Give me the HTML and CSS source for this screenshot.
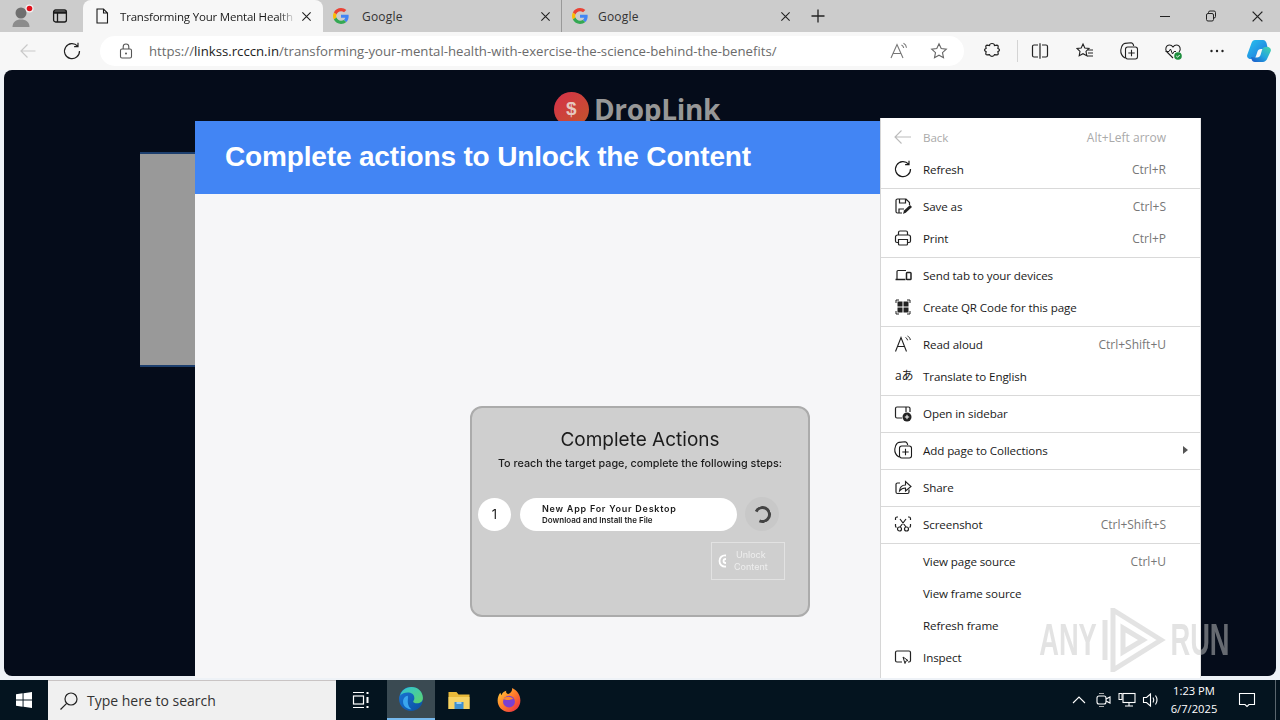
FILE: index.html
```html
<!DOCTYPE html>
<html lang="en">
<head>
    <meta charset="UTF-8">
    <title>Transforming Your Mental Health</title>
    <link rel="stylesheet" href="styles.css">
</head>
<body>
    <svg class="defs" width="0" height="0">
        <symbol id="g-logo" viewBox="0 0 48 48">
            <path fill="#EA4335" d="M24 9.5c3.54 0 6.71 1.22 9.21 3.6l6.85-6.85C35.9 2.38 30.47 0 24 0 14.62 0 6.51 5.38 2.56 13.22l7.98 6.19C12.43 13.72 17.74 9.5 24 9.5z"/>
            <path fill="#4285F4" d="M46.98 24.55c0-1.57-.15-3.09-.38-4.55H24v9.02h12.94c-.58 2.96-2.26 5.48-4.78 7.18l7.73 6c4.51-4.18 7.09-10.36 7.09-17.65z"/>
            <path fill="#FBBC05" d="M10.53 28.59c-.48-1.45-.76-2.99-.76-4.59s.27-3.14.76-4.59l-7.98-6.19C.92 16.46 0 20.12 0 24c0 3.88.92 7.54 2.56 10.78l7.97-6.19z"/>
            <path fill="#34A853" d="M24 48c6.48 0 11.93-2.13 15.89-5.81l-7.73-6c-2.15 1.45-4.92 2.3-8.16 2.3-6.26 0-11.57-4.22-13.47-9.91l-7.98 6.19C6.51 42.62 14.62 48 24 48z"/>
        </symbol>
        <symbol id="i-refresh" viewBox="0 0 20 20">
            <path d="M15.6 5.2A7.5 7.5 0 1 0 17.5 10M16 1.8v3.9h-3.9" fill="none" stroke="currentColor" stroke-width="1.2"/>
        </symbol>
        <symbol id="i-close" viewBox="0 0 12 12">
            <path d="M1.5 1.5l9 9M10.5 1.5l-9 9" fill="none" stroke="currentColor" stroke-width="1.2"/>
        </symbol>
        <symbol id="i-collections" viewBox="0 0 20 20">
            <path d="M6 17C3.500 15.500 1.500 12.500 1.800 9 2 6.500 3 4.500 4 3.500c.5-.6 1.200-1 2-1.100l6-.6c1.300 0 2.300 1 2.700 3.200" fill="none" stroke="currentColor" stroke-width="1.1"/>
            <rect x="6.500" y="6" width="12" height="12" rx="2.200" fill="none" stroke="currentColor" stroke-width="1.1"/>
            <path d="M12.500 8.800v6.400M9.300 12h6.400" fill="none" stroke="currentColor" stroke-width="1.1"/>
        </symbol>
    </svg>

    <!-- Flikar -->
    <div class="tabstrip">
        <div class="profile">
            <svg width="24" height="24" viewBox="0 0 24 24">
                <circle cx="10" cy="9" r="5.500" fill="#6f6f6f"/>
                <path d="M1.500 23c0-5 3.500-7.500 8.500-7.500s8.500 2.500 8.500 7.500z" fill="#8c8c8c"/>
                <circle cx="18.500" cy="4.500" r="4" fill="#f3f3f3"/>
                <circle cx="18.500" cy="4.500" r="2.800" fill="#e0101c"/>
            </svg>
        </div>
        <div class="tabs-button">
            <svg width="16" height="16" viewBox="0 0 16 16">
                <rect x="1.600" y="2" width="12.800" height="12" rx="2" fill="none" stroke="#1a1a1a" stroke-width="1.300"/>
                <path d="M1.600 3.800h12.800M1.600 5h12.800M5.500 5v9" fill="none" stroke="#1a1a1a" stroke-width="1.300"/>
            </svg>
        </div>
        <div class="tab active">
            <svg width="14" height="16" viewBox="0 0 14 16">
                <path d="M2 1h6.500L12.500 5v10H2z M8.500 1v4h4" fill="none" stroke="#1a1a1a" stroke-width="1.100"/>
            </svg>
            <span class="tab-title fade">Transforming Your Mental Health</span>
            <svg class="tab-close" width="11" height="11"><use href="#i-close"/></svg>
        </div>
        <div class="tab">
            <svg width="16" height="16"><use href="#g-logo"/></svg>
            <span class="tab-title">Google</span>
            <svg class="tab-close" width="11" height="11"><use href="#i-close"/></svg>
        </div>
        <div class="tab third">
            <svg width="16" height="16"><use href="#g-logo"/></svg>
            <span class="tab-title">Google</span>
            <svg class="tab-close" width="11" height="11"><use href="#i-close"/></svg>
        </div>
        <div class="new-tab">
            <svg width="16" height="16" viewBox="0 0 16 16"><path d="M8 1.500v13M1.500 8h13" fill="none" stroke="#222" stroke-width="1.300"/></svg>
        </div>
        <div class="window-buttons">
            <div class="win-btn"><svg width="12" height="12" viewBox="0 0 12 12"><path d="M1 6.500h10" stroke="#222" stroke-width="1"/></svg></div>
            <div class="win-btn"><svg width="12" height="12" viewBox="0 0 12 12"><path d="M3.500 3.500V2.500a1.500 1.500 0 0 1 1.500-1.500h4a1.500 1.500 0 0 1 1.500 1.500v4A1.500 1.500 0 0 1 9 8M1.500 5a1.500 1.500 0 0 1 1.500-1.500h4A1.500 1.500 0 0 1 8.500 5v4.500A1.500 1.500 0 0 1 7 11H3a1.500 1.500 0 0 1-1.500-1.500z" fill="none" stroke="#222"/></svg></div>
            <div class="win-btn"><svg width="13" height="13"><use href="#i-close"/></svg></div>
        </div>
    </div>

    <!-- Adressfält och verktyg -->
    <div class="toolbar">
        <div class="tool back">
            <svg width="18" height="18" viewBox="0 0 18 18"><path d="M16.500 9H2M8.500 2.500L2 9l6.500 6.500" fill="none" stroke="#c9c9c9" stroke-width="1.200"/></svg>
        </div>
        <div class="tool refresh"><svg width="20" height="20"><use href="#i-refresh"/></svg></div>
        <div class="address">
            <svg width="14" height="16" viewBox="0 0 14 16">
                <rect x="1.500" y="6" width="11" height="9" rx="1.500" fill="none" stroke="#555" stroke-width="1.100"/>
                <path d="M4.200 6V3.800a2.800 2.800 0 0 1 5.600 0V6" fill="none" stroke="#555" stroke-width="1.100"/>
                <circle cx="7" cy="10.500" r="1" fill="#555"/>
            </svg>
            <span class="url"><span class="url-dim">https://</span>linkss.rcccn.in<span class="url-dim">/transforming-your-mental-health-with-exercise-the-science-behind-the-benefits/</span></span>
            <svg class="addr-read" width="20" height="20" viewBox="0 0 20 20">
                <path d="M2 17L8 3.500 14 17M4 12.500h8" fill="none" stroke="#777" stroke-width="1.100"/>
                <path d="M12.500 4c1.200.6 2 1.600 2.200 3M14.500 2.200c1.800.9 2.800 2.500 3 4.500" fill="none" stroke="#777" stroke-width="1.100"/>
            </svg>
            <svg class="addr-star" width="18" height="18" viewBox="0 0 18 18"><path d="M9 1.800l2.200 4.700 5.100.6-3.800 3.500 1 5.100L9 13.200l-4.500 2.500 1-5.100L1.700 7.100l5.100-.6z" fill="none" stroke="#666" stroke-width="1.100"/></svg>
        </div>
        <div class="tool extensions">
            <svg width="18" height="18" viewBox="0 0 18 18"><path d="M9 1.500c1.500 0 2.500 1 2.500 2l2.500-.3c.8 0 1.200.5 1.200 1.200l-.3 2.100c1.100.3 1.600 1 1.600 1.500s-.5 1.300-1.600 1.600l.3 2.100c0 .8-.5 1.300-1.200 1.200l-2.500-.3c-.3 1-1.200 1.700-2.500 1.700s-2.200-.7-2.500-1.700l-2.500.3c-.7 0-1.200-.4-1.200-1.200l.3-2.100c-1.100-.3-1.600-1-1.600-1.600s.5-1.200 1.600-1.500l-.3-2.100c0-.7.4-1.200 1.200-1.200l2.500.3c0-1 1-2 2.500-2z" fill="none" stroke="#222" stroke-width="1.200"/></svg>
        </div>
        <div class="divider"></div>
        <div class="tool split">
            <svg width="18" height="18" viewBox="0 0 18 18"><path d="M7 3H3a1.500 1.500 0 0 0-1.500 1.500v9A1.500 1.500 0 0 0 3 15h4M11 3h4a1.500 1.500 0 0 1 1.500 1.500v9A1.500 1.500 0 0 1 15 15h-4M9 1.200v15.600" fill="none" stroke="#222" stroke-width="1.200"/></svg>
        </div>
        <div class="tool">
            <svg width="18" height="18" viewBox="0 0 18 18"><path d="M7 2l1.800 4 4.200.5-3 2.900.8 4.300L7 11.700l-3.800 2 .8-4.300L1 6.500 5.200 6z" fill="none" stroke="#222" stroke-width="1.100"/><path d="M12 8h5M12 11h5M11 14h6" stroke="#222"/></svg>
        </div>
        <div class="tool"><svg width="20" height="20"><use href="#i-collections"/></svg></div>
        <div class="tool">
            <svg width="19" height="19" viewBox="0 0 19 19">
                <path d="M9 16L3 10C.5 7.500 2 3 5.500 3c1.500 0 2.700.8 3.500 2 .8-1.200 2-2 3.500-2 3.500 0 5 4.500 2.500 7" fill="none" stroke="#222" stroke-width="1.100"/>
                <path d="M1.500 9.500h3.500l1.500-2.500 2 5 1.500-2.500h2" fill="none" stroke="#222"/>
                <circle cx="14" cy="14" r="3.800" fill="#1e8e3e"/>
                <path d="M12.300 14l1.200 1.200 2.200-2.200" fill="none" stroke="#fff"/>
            </svg>
        </div>
        <div class="tool">
            <svg width="16" height="16" viewBox="0 0 16 16"><circle cx="2.500" cy="8" r="1.200" fill="#222"/><circle cx="8" cy="8" r="1.200" fill="#222"/><circle cx="13.500" cy="8" r="1.200" fill="#222"/></svg>
        </div>
        <div class="tool copilot">
            <svg width="26" height="26" viewBox="0 0 26 26">
                <defs>
                    <linearGradient id="cop-a" x1="0" y1="0" x2="1" y2="1"><stop offset="0" stop-color="#27c4ee"/><stop offset="1" stop-color="#1f6fdc"/></linearGradient>
                    <linearGradient id="cop-b" x1="1" y1="0" x2="0" y2="1"><stop offset="0" stop-color="#45d6a8"/><stop offset=".5" stop-color="#23a5e0"/><stop offset="1" stop-color="#1a55c8"/></linearGradient>
                </defs>
                <path d="M9 2h8c2 0 3 1.500 3.500 3L22 11h-7c-2 0-3 1-3.500 2.500L10 18c-.6 2-2 3-3.500 3H4.500C2.500 21 .5 19 1.200 17L5.500 5C6.200 3 7.500 2 9 2z" fill="url(#cop-a)"/>
                <path d="M17 24H9c-2 0-3-1-3.500-3L5 19l6 .5c2 0 3-1 3.500-2.500l1.500-5c.5-1.800 1.800-3 3.500-3h2c2 0 4 2 3.300 4l-4 8.500C19.800 23 18.500 24 17 24z" fill="url(#cop-b)"/>
            </svg>
        </div>
    </div>

    <!-- Sidinnehåll -->
    <div class="viewport">
        <div class="page">
            <div class="brand">
                <div class="brand-mark"><span>$</span></div>
                <span class="brand-name">DropLink</span>
            </div>
        </div>
        <div class="side-ad"></div>
        <div class="modal">
            <div class="modal-head">Complete actions to Unlock the Content</div>
            <div class="modal-body">
                <div class="card">
                    <h2 class="card-title">Complete Actions</h2>
                    <p class="card-sub">To reach the target page, complete the following steps:</p>
                    <div class="step">
                        <div class="step-num">1</div>
                        <div class="step-pill">
                            <strong>New App For Your Desktop</strong>
                            <small>Download and Install the File</small>
                        </div>
                        <div class="step-wait"><div class="spinner"></div></div>
                    </div>
                    <div class="unlock">
                        <svg width="12" height="16" viewBox="0 0 12 16"><path d="M9 2.500C5 2 2.500 4.500 2.500 8S5 14 9 13.500M9 6c-1.500 0-2.500 1-2.500 2s1 2 2.500 2" fill="none" stroke="#fff" stroke-width="1.800"/></svg>
                        <span>Unlock<br>Content</span>
                    </div>
                </div>
            </div>
        </div>
    </div>

    <!-- Högerklicksmeny -->
    <div class="menu">
        <div class="menu-group">
            <div class="item disabled">
                <svg class="item-icon" width="20" height="20" viewBox="0 0 20 20"><path d="M18 10H2.500M8.500 3.500L2 10l6.500 6.500" fill="none" stroke="#bbb" stroke-width="1.100"/></svg>
                <span class="label">Back</span><span class="key">Alt+Left arrow</span>
            </div>
            <div class="item">
                <svg class="item-icon" width="20" height="20"><use href="#i-refresh"/></svg>
                <span class="label">Refresh</span><span class="key">Ctrl+R</span>
            </div>
        </div>
        <div class="menu-group">
            <div class="item">
                <svg class="item-icon" width="20" height="20" viewBox="0 0 20 20"><path d="M9 17H4.500A1.500 1.500 0 0 1 3 15.500v-11A1.500 1.500 0 0 1 4.500 3H13l3.500 3.500V9M6.500 3v4h6V3M6 17v-4h5" fill="none" stroke="#222" stroke-width="1.200"/><path d="M10 18l1-3.500 6-5.500 2 2-6 5.500z" fill="#222"/></svg>
                <span class="label">Save as</span><span class="key">Ctrl+S</span>
            </div>
            <div class="item">
                <svg class="item-icon" width="20" height="20" viewBox="0 0 20 20"><path d="M5.500 7V4.500A1.500 1.500 0 0 1 7 3h6a1.500 1.500 0 0 1 1.500 1.500V7M5.500 14.500H4A1.500 1.500 0 0 1 2.500 13V9A2 2 0 0 1 4.500 7h11a2 2 0 0 1 2 2v4a1.500 1.500 0 0 1-1.500 1.500h-1.500M5.500 11.500h9V16a1 1 0 0 1-1 1h-7a1 1 0 0 1-1-1z" fill="none" stroke="#222" stroke-width="1.200"/></svg>
                <span class="label">Print</span><span class="key">Ctrl+P</span>
            </div>
        </div>
        <div class="menu-group">
            <div class="item">
                <svg class="item-icon" width="20" height="20" viewBox="0 0 20 20"><path d="M4 14V6.500A1 1 0 0 1 5 5.500h8" fill="none" stroke="#222" stroke-width="1.200"/><path d="M2.500 14.500h10" stroke="#222" stroke-width="1.500"/><rect x="13.500" y="7.500" width="4.500" height="7" rx=".8" fill="none" stroke="#222" stroke-width="1.500"/></svg>
                <span class="label">Send tab to your devices</span>
            </div>
            <div class="item">
                <svg class="item-icon" width="20" height="20" viewBox="0 0 20 20"><path d="M3 6V3h3M14 3h3v3M17 14v3h-3M6 17H3v-3" fill="none" stroke="#222"/><rect x="4.500" y="4.500" width="5" height="5" fill="#222"/><rect x="10.500" y="4.500" width="5" height="5" fill="#222"/><rect x="4.500" y="10.500" width="5" height="5" fill="#222"/><rect x="10.500" y="10.500" width="5" height="5" fill="#222"/></svg>
                <span class="label">Create QR Code for this page</span>
            </div>
        </div>
        <div class="menu-group">
            <div class="item">
                <svg class="item-icon" width="20" height="20" viewBox="0 0 20 20"><path d="M2.500 17.500L8 3.500l5.500 14M4.500 12.500h7" fill="none" stroke="#222" stroke-width="1.100"/><path d="M12.500 3.500c1.200.6 1.900 1.500 2.100 2.800M14.500 2c1.700.9 2.600 2.200 2.800 4" fill="none" stroke="#222"/></svg>
                <span class="label">Read aloud</span><span class="key">Ctrl+Shift+U</span>
            </div>
            <div class="item">
                <span class="item-icon translate">aあ</span>
                <span class="label">Translate to English</span>
            </div>
        </div>
        <div class="menu-group">
            <div class="item">
                <svg class="item-icon" width="20" height="20" viewBox="0 0 20 20"><path d="M9 15H4a1.500 1.500 0 0 1-1.500-1.500v-8A1.500 1.500 0 0 1 4 4h11.500A1.500 1.500 0 0 1 17 5.500V9M13 4v5" fill="none" stroke="#222" stroke-width="1.200"/><circle cx="14" cy="14" r="4.500" fill="#222"/><path d="M14 11.800v4.400M11.800 14h4.400" stroke="#fff"/></svg>
                <span class="label">Open in sidebar</span>
            </div>
        </div>
        <div class="menu-group">
            <div class="item">
                <svg class="item-icon" width="20" height="20"><use href="#i-collections"/></svg>
                <span class="label">Add page to Collections</span><span class="more"></span>
            </div>
        </div>
        <div class="menu-group">
            <div class="item">
                <svg class="item-icon" width="20" height="20" viewBox="0 0 20 20"><path d="M16 12.500V15a1.500 1.500 0 0 1-1.500 1.500H4.500A1.500 1.500 0 0 1 3 15V7.500A1.500 1.500 0 0 1 4.500 6H7" fill="none" stroke="#222" stroke-width="1.200"/><path d="M6.500 14c.3-3.500 2.500-6 6-6V4.500L18 9.500l-5.500 4.500v-3c-2.500 0-4.500 1-6 3z" fill="none" stroke="#222" stroke-width="1.100"/></svg>
                <span class="label">Share</span>
            </div>
        </div>
        <div class="menu-group">
            <div class="item">
                <svg class="item-icon" width="20" height="20" viewBox="0 0 20 20"><path d="M5 3H4a1.500 1.500 0 0 0-1.500 1.500V6M15 3h1a1.500 1.500 0 0 1 1.500 1.500V6M2.500 10v2a1.500 1.500 0 0 0 1 1.400M17.500 10v2a1.500 1.500 0 0 1-1 1.400M7 5l6 8M13 5l-6 8" fill="none" stroke="#222" stroke-width="1.200"/><circle cx="6.500" cy="15" r="2" fill="none" stroke="#222" stroke-width="1.200"/><circle cx="13.500" cy="15" r="2" fill="none" stroke="#222" stroke-width="1.200"/></svg>
                <span class="label">Screenshot</span><span class="key">Ctrl+Shift+S</span>
            </div>
        </div>
        <div class="menu-group last">
            <div class="item"><span class="item-icon"></span><span class="label">View page source</span><span class="key">Ctrl+U</span></div>
            <div class="item"><span class="item-icon"></span><span class="label">View frame source</span></div>
            <div class="item"><span class="item-icon"></span><span class="label">Refresh frame</span></div>
            <div class="item">
                <svg class="item-icon" width="20" height="20" viewBox="0 0 20 20"><path d="M9 15H4a1.500 1.500 0 0 1-1.500-1.500v-8A1.500 1.500 0 0 1 4 4h12a1.500 1.500 0 0 1 1.500 1.500v8A1.500 1.500 0 0 1 16 15h-1" fill="none" stroke="#222" stroke-width="1.200"/><path d="M10 10l5 3.500-2.200.6-.8 2.400z" fill="#fff" stroke="#222"/></svg>
                <span class="label">Inspect</span>
            </div>
        </div>
    </div>

    <!-- Vattenstämpel -->
    <div class="watermark">
        <span class="wm-text">ANY</span>
        <svg width="66" height="64" viewBox="0 0 66 64"><path d="M4 12v40M12 2l48 30-48 30zM22 20l20 12-20 12z" fill="none" stroke="currentColor" stroke-width="5"/></svg>
        <span class="wm-text">RUN</span>
    </div>

    <!-- Aktivitetsfält -->
    <div class="taskbar">
        <div class="start">
            <svg width="16" height="16" viewBox="0 0 17 17"><path fill="#fff" d="M0 2.400l7-1v6.700H0zM8 1.300L17 0v8.100H8zM0 9h7v6.700l-7-1zM8 9h9v8l-9-1.300z"/></svg>
        </div>
        <div class="search">
            <svg width="20" height="20" viewBox="0 0 20 20"><circle cx="12" cy="8" r="6" fill="none" stroke="#222" stroke-width="1.200"/><path d="M7.700 12.300L1.500 18.500" stroke="#222" stroke-width="1.200"/></svg>
            <span>Type here to search</span>
        </div>
        <div class="task-btn view">
            <svg width="18" height="18" viewBox="0 0 18 18"><path d="M1 1.500h11M1 16.500h11" stroke="#fff" stroke-width="1.200"/><rect x="1.500" y="5" width="10" height="8" fill="none" stroke="#fff" stroke-width="1.200"/><path d="M15.500 1v2M15.500 6v6M15.500 15v2" stroke="#fff" stroke-width="2"/></svg>
        </div>
        <div class="task-btn current">
            <svg width="26" height="26" viewBox="0 0 24 24">
                <defs>
                    <linearGradient id="edge-a" x1="0" y1="0" x2="1" y2="1"><stop offset="0" stop-color="#2fc2d8"/><stop offset="1" stop-color="#5ed46a"/></linearGradient>
                    <linearGradient id="edge-b" x1="0" y1="0" x2="1" y2="1"><stop offset="0" stop-color="#1976d8"/><stop offset="1" stop-color="#0c4f9e"/></linearGradient>
                </defs>
                <circle cx="12" cy="12" r="11" fill="url(#edge-b)"/>
                <path d="M2 9C3 4.500 7 1 12.500 1 18.500 1 23 5.500 23 11c0 3-2.500 5-5.500 5-2 0-3.500-.7-3.500-1.700 0-.4.300-.7.500-1 .4-.5.6-1.200.6-2C15.100 7.500 12 6 9 6 6 6 3.500 7 2 9z" fill="url(#edge-a)"/>
                <path d="M9 9c-3 .5-4.500 3-4.300 6 .2 3.500 3.500 6.500 7.800 6.500-2-1.500-3.500-4-3.500-7 0-2 .5-4 0-5.500z" fill="#3aa6ee"/>
            </svg>
        </div>
        <div class="task-btn">
            <svg width="24" height="24" viewBox="0 0 24 24">
                <path d="M1.500 4h8l2 2.500h11V21h-21z" fill="#e8b93a"/>
                <path d="M1.500 9h21v12h-21z" fill="#f6d365"/>
                <rect x="7.500" y="14" width="9" height="7" fill="#3d8fd1"/>
                <rect x="9.500" y="14" width="5" height="2" fill="#9cd0f5"/>
            </svg>
        </div>
        <div class="task-btn">
            <svg width="26" height="26" viewBox="0 0 24 24">
                <defs>
                    <linearGradient id="fox-a" x1="0" y1="0" x2="1" y2="1"><stop offset="0" stop-color="#ffd43a"/><stop offset=".5" stop-color="#ff7a2a"/><stop offset="1" stop-color="#e6244a"/></linearGradient>
                </defs>
                <path d="M12 23C5.500 23 1.500 18 1.500 12.500c0-3 1-5.500 2.500-7.300l1 2.300C6 5 8 3.800 9.500 3.500 9 4.800 9.500 6 11 6.500 13.500 6 15 4 15 1c4 2 7.500 6 7.500 11.500S18.500 23 12 23z" fill="url(#fox-a)"/>
                <circle cx="12" cy="13.500" r="5.500" fill="#7a3fd0"/>
                <path d="M7 11c2-2.500 6-3 9 0-2 0-3 1-5 1-1.500 0-3-.3-4-1z" fill="#ff8a2a"/>
            </svg>
        </div>
        <div class="tray">
            <svg class="tray-icon" width="16" height="16" viewBox="0 0 16 16"><path d="M2 11l6-6 6 6" fill="none" stroke="#fff" stroke-width="1.100"/></svg>
            <svg class="tray-icon" width="18" height="18" viewBox="0 0 18 18"><rect x="3" y="5" width="9" height="8" rx="2" fill="none" stroke="#fff" stroke-width="1.100"/><path d="M12 8l4-2v6l-4-2" fill="none" stroke="#fff" stroke-width="1.100"/><path d="M5 2.500h5M5 15.500h5" stroke="#aaa"/></svg>
            <svg class="tray-icon" width="18" height="18" viewBox="0 0 18 18"><rect x="5" y="2.500" width="12" height="9" fill="none" stroke="#fff" stroke-width="1.100"/><rect x="1" y="2.500" width="3" height="6" fill="none" stroke="#fff"/><path d="M11 11.500v3M7 15h8" stroke="#fff" stroke-width="1.100"/></svg>
            <svg class="tray-icon" width="18" height="18" viewBox="0 0 18 18"><path d="M1.500 6.500h3L8.500 3v12l-4-3.500h-3z" fill="none" stroke="#fff" stroke-width="1.100"/><path d="M11 6.500c1 1.500 1 3.500 0 5M13.500 4.500c1.800 2.700 1.800 6.300 0 9" fill="none" stroke="#fff" stroke-width="1.100"/></svg>
        </div>
        <div class="clock">
            <span>1:23 PM</span>
            <span>6/7/2025</span>
        </div>
        <div class="action-center">
            <svg width="18" height="18" viewBox="0 0 18 18"><path d="M1.500 2.500h15v11H11l-2 2-2-2H1.500z" fill="none" stroke="#fff" stroke-width="1.100"/></svg>
        </div>
        <div class="show-desktop"></div>
    </div>
</body>
</html>
```

FILE: styles.css
```css
* {
    box-sizing: border-box;
}
body {
    margin: 0;
    width: 1280px;
    height: 720px;
    overflow: hidden;
    position: relative;
    display: flex;
    flex-direction: column;
    font-family: "Open Sans", sans-serif;
    color: #1a1a1a;
    background: #eef2f7;
}
.defs {
    position: absolute;
}
svg {
    display: block;
    flex: none;
}

/* Flikar */
.tabstrip {
    height: 32px;
    flex: none;
    display: flex;
    background: #cccccc;
}
.profile {
    width: 44px;
    display: flex;
    align-items: center;
    justify-content: center;
    padding-left: 2px;
}
.tabs-button {
    width: 32px;
    margin-right: 7px;
    display: flex;
    align-items: center;
    justify-content: center;
}
.tab {
    width: 238px;
    display: flex;
    align-items: center;
    padding: 0 10px;
    font-size: 12px;
    color: #333;
}
.tab.third {
    width: 240px;
    border-left: 1px solid #999;
}
.tab.active {
    width: 240px;
    background: #f7f7f7;
    border-radius: 8px 8px 0 0;
    color: #1a1a1a;
    padding: 0 11px 0 12px;
    font-size: 11.5px;
    letter-spacing: -0.2px;
}
.tab-title {
    flex: 1;
    margin-left: 13px;
    letter-spacing: 0.2px;
    white-space: nowrap;
    overflow: hidden;
}
.tab.third .tab-title {
    margin-left: 10px;
}
.tab.active .tab-title {
    margin-left: 11px;
    letter-spacing: -0.2px;
}
.fade {
    -webkit-mask-image: linear-gradient(to right, #000 90%, transparent 100%);
    mask-image: linear-gradient(to right, #000 90%, transparent 100%);
}
.tab-close {
    margin-left: 5px;
    color: #222;
}
.new-tab {
    width: 34px;
    display: flex;
    align-items: center;
    justify-content: center;
}
.window-buttons {
    margin-left: auto;
    display: flex;
}
.win-btn {
    width: 46px;
    display: flex;
    align-items: center;
    justify-content: center;
    color: #222;
}

/* Verktygsrad */
.toolbar {
    height: 38px;
    flex: none;
    display: flex;
    align-items: center;
    background: #f7f7f7;
}
.tool {
    width: 44px;
    display: flex;
    align-items: center;
    justify-content: center;
    color: #222;
}
.tool.back {
    width: 50px;
    padding-left: 6px;
}
.tool.refresh {
    width: 50px;
    padding-right: 6px;
}
.address {
    width: 864px;
    height: 30px;
    display: flex;
    align-items: center;
    padding-left: 19px;
    background: #fff;
    border-radius: 15px;
}
.url {
    margin-left: 16px;
    font-size: 13.2px;
    color: #222;
    white-space: nowrap;
}
.url-dim {
    color: #6b6b6b;
}
.addr-read {
    margin-left: auto;
}
.addr-star {
    margin: 0 16px 0 21px;
}
.tool.extensions {
    width: 56px;
}
.divider {
    width: 1px;
    height: 22px;
    margin: 0 -1px 0 -3px;
    background: #d4d4d4;
}
.tool.split {
    width: 46px;
}
.tool.copilot {
    width: 40px;
}

/* Sidan */
.viewport {
    height: 610px;
    flex: none;
    padding: 0 4px 4px;
    position: relative;
}
.page {
    height: 100%;
    background: #050c1a;
    border-radius: 8px;
    padding-top: 20px;
    display: flex;
    justify-content: center;
    align-items: flex-start;
}
.brand {
    display: flex;
    align-items: center;
    gap: 5px;
    margin-right: 6px;
}
.brand-mark {
    width: 35px;
    height: 35px;
    border-radius: 50%;
    background: linear-gradient(135deg, #d6304a, #c2562a);
    display: flex;
    align-items: center;
    justify-content: center;
    color: #e6c9c0;
    font: bold 19px "Liberation Sans", sans-serif;
}
.brand-name {
    font: bold 28px "Open Sans", sans-serif;
    color: #979797;
    letter-spacing: -0.3px;
}
.side-ad {
    position: absolute;
    left: 140px;
    top: 82px;
    width: 60px;
    height: 215px;
    background: #999999;
    border-top: 2px solid #1d3f6e;
    border-bottom: 2px solid #1d3f6e;
}
.modal {
    position: absolute;
    left: 195px;
    top: 51px;
    width: 890px;
    height: 557px;
    background: #f6f6f8;
    display: flex;
    flex-direction: column;
}
.modal-head {
    height: 73px;
    flex: none;
    background: #4285f4;
    color: #fff;
    display: flex;
    align-items: center;
    padding: 0 0 2px 30px;
    font: bold 28px "Liberation Sans", sans-serif;
    letter-spacing: -0.16px;
}
.modal-body {
    padding: 212px 0 0 275px;
}
.card {
    width: 340px;
    height: 211px;
    background: #cfcfcf;
    border: 2px solid #ababab;
    border-radius: 12px;
    padding: 20px 6px 0;
    display: flex;
    flex-direction: column;
    font-family: Inter, sans-serif;
    color: #1c1c1c;
    filter: blur(0.45px);
}
.card-title {
    margin: 0;
    text-align: center;
    font-size: 19px;
    font-weight: 400;
    line-height: 24px;
}
.card-sub {
    margin: 5px 0 0;
    text-align: center;
    font-size: 10.8px;
    line-height: 14px;
    font-weight: 500;
    white-space: nowrap;
}
.step {
    display: flex;
    align-items: center;
    margin-top: 26px;
}
.step-num {
    width: 33px;
    height: 33px;
    border-radius: 50%;
    background: #fff;
    display: flex;
    align-items: center;
    justify-content: center;
    font-size: 13px;
}
.step-pill {
    width: 217px;
    height: 33px;
    margin-left: 9px;
    border-radius: 17px;
    background: #fff;
    padding-left: 22px;
    display: flex;
    flex-direction: column;
    justify-content: center;
}
.step-pill strong {
    font-size: 9px;
    line-height: 12px;
    font-weight: 600;
    letter-spacing: 0.75px;
}
.step-pill small {
    font-size: 8px;
    line-height: 10px;
    font-weight: 600;
}
.step-wait {
    width: 34px;
    height: 34px;
    margin-left: 8px;
    border-radius: 50%;
    background: #c8c8c8;
    display: flex;
    align-items: center;
    justify-content: center;
}
.spinner {
    width: 17px;
    height: 17px;
    border: 3px solid #444;
    border-left-color: transparent;
    border-radius: 50%;
    transform: rotate(-20deg);
}
.unlock {
    width: 74px;
    height: 38px;
    margin: 11px 0 0 233px;
    border: 1px solid #e2e2e2;
    color: #eeeeee;
    display: flex;
    align-items: center;
    padding-left: 5px;
    gap: 5px;
    font-size: 9px;
    line-height: 12px;
    text-align: center;
}

/* Meny */
.menu {
    position: absolute;
    left: 880px;
    top: 118px;
    width: 321px;
    height: 560px;
    overflow: hidden;
    background: #fff;
    border-left: 1px solid #d6d6d6;
    border-right: 1px solid #e4e4e4;
    padding-top: 3px;
    font-size: 11.6px;
}
.menu-group {
    border-bottom: 1px solid #d9d9d9;
    margin-bottom: 1px;
    padding-bottom: 3px;
}
.menu-group.last {
    border-bottom: none;
}
.item {
    height: 32px;
    display: flex;
    align-items: center;
    padding: 0 34px 0 12px;
    color: #1a1a1a;
    letter-spacing: -0.1px;
}
.item-icon {
    width: 20px;
    height: 20px;
    flex: none;
    margin-right: 10px;
}
.translate {
    font-size: 12px;
    line-height: 20px;
    padding-left: 2px;
    font-family: "Open Sans", "Noto Sans CJK JP", sans-serif;
    white-space: nowrap;
}
.label {
    flex: 1;
    white-space: nowrap;
}
.key {
    color: #777;
    font-size: 12px;
    letter-spacing: 0;
    white-space: nowrap;
}
.disabled .label,
.disabled .key {
    color: #aaa;
}
.more {
    width: 0;
    height: 0;
    margin-right: -22px;
    border-left: 5px solid #555;
    border-top: 4px solid transparent;
    border-bottom: 4px solid transparent;
}

/* Vattenstämpel */
.watermark {
    position: absolute;
    left: 1037px;
    top: 608px;
    height: 64px;
    width: 194px;
    display: flex;
    align-items: center;
    justify-content: space-between;
    color: rgba(200, 200, 200, 0.5);
}
.wm-text {
    width: 62px;
    font: bold 44px "Liberation Sans", sans-serif;
    transform: scaleX(0.62);
    transform-origin: center;
    display: flex;
    justify-content: center;
}

/* Aktivitetsfält */
.taskbar {
    height: 40px;
    flex: none;
    display: flex;
    align-items: stretch;
    background: #04141f;
    color: #fff;
}
.start {
    width: 48px;
    display: flex;
    align-items: center;
    justify-content: center;
}
.search {
    width: 288px;
    display: flex;
    align-items: center;
    gap: 8px;
    padding-left: 11px;
    background: #f0f0f0;
    border-top: 1px solid #c9c4c4;
    color: #333;
    font-size: 14px;
}
.task-btn {
    width: 48px;
    margin-right: 2px;
    display: flex;
    align-items: center;
    justify-content: center;
}
.task-btn.view {
    width: 50px;
    margin-right: 1px;
}
.task-btn.current {
    margin-right: 0;
    background: #3a4a52;
    border-bottom: 2px solid #76b9ed;
}
.tray {
    margin-left: auto;
    display: flex;
    align-items: center;
    gap: 6px;
    padding-right: 5px;
}
.tray-icon {
    width: 18px;
}
.clock {
    width: 58px;
    display: flex;
    flex-direction: column;
    align-items: center;
    justify-content: center;
    font-size: 11.2px;
    line-height: 18px;
}
.action-center {
    width: 48px;
    display: flex;
    align-items: center;
    justify-content: center;
}
.show-desktop {
    width: 5px;
    margin-left: 4px;
    border-left: 1px solid #5a666e;
}
```
